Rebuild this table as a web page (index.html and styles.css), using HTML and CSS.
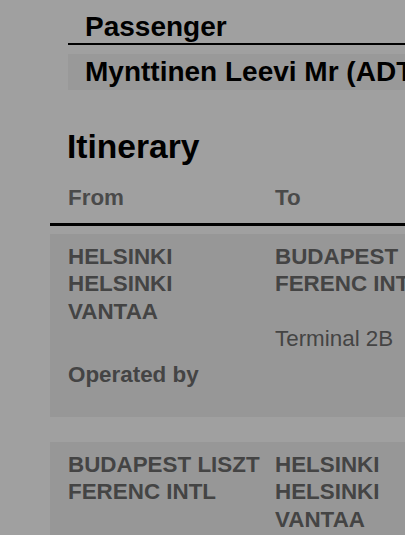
FILE: index.html
```html
<!DOCTYPE html>
<html lang="en">
<head>
<meta charset="utf-8">
<title>Booking</title>
<link rel="stylesheet" href="styles.css">
</head>
<body>
<main class="page">
  <section class="passenger">
    <h2 class="passenger-title">Passenger</h2>
    <div class="passenger-name">Mynttinen Leevi Mr (ADT)</div>
  </section>

  <section class="itinerary">
    <h2 class="itinerary-title">Itinerary</h2>
    <div class="itin-head">
      <div class="cell">From</div>
      <div class="cell">To</div>
    </div>

    <div class="flight">
      <div class="cell city">HELSINKI HELSINKI VANTAA</div>
      <div class="cell city">BUDAPEST LISZT FERENC INTL</div>
      <div class="cell"></div>
      <div class="cell terminal">Terminal 2B</div>
      <div class="cell label operated">Operated by</div>
      <div class="cell operated"></div>
    </div>

    <div class="flight">
      <div class="cell city">BUDAPEST LISZT FERENC INTL</div>
      <div class="cell city">HELSINKI HELSINKI VANTAA</div>
    </div>
  </section>
</main>
</body>
</html>
```

FILE: styles.css
```css
html, body {
  margin: 0;
  padding: 0;
  overflow: hidden;
}

body {
  background: #a0a0a0;
  font-family: "Liberation Sans", Arial, sans-serif;
  width: 405px;
  height: 535px;
}

.page {
  width: 700px;
}

.passenger {
  margin-left: 68px;
  padding-top: 11px;
}

.passenger-title {
  margin: 0;
  padding-left: 17px;
  font-size: 28px;
  line-height: 32px;
  font-weight: bold;
  color: #000;
  border-bottom: 2px solid #000;
}

.passenger-name {
  margin-top: 9px;
  padding: 2px 17px;
  background: #999999;
  font-size: 28px;
  line-height: 32px;
  font-weight: bold;
  color: #000;
  white-space: nowrap;
}

.itinerary {
  margin-left: 50px;
  margin-top: 37px;
}

.itinerary-title {
  margin: 0;
  padding-left: 17px;
  font-size: 33.6px;
  line-height: 40px;
  font-weight: bold;
  color: #000;
}

.itin-head {
  display: grid;
  grid-template-columns: 207px 420px;
  margin-top: 17px;
  padding: 0 0 11px 18px;
  border-bottom: 3px solid #000;
  font-size: 22.4px;
  line-height: 27.6px;
  font-weight: bold;
  color: #4a4a4a;
}

.flight {
  display: grid;
  grid-template-columns: 207px 420px;
  margin-top: 8px;
  padding: 9px 0 28px 18px;
  background: #979797;
  font-size: 22.4px;
  line-height: 27.6px;
  color: #444;
}

.flight + .flight {
  margin-top: 25px;
}

.city {
  font-weight: bold;
  padding-right: 12px;
}

.city:nth-child(2) {
  width: 200px;
}

.terminal {
  font-weight: normal;
}

.label {
  font-weight: bold;
}

.operated {
  margin-top: 8px;
}
```
